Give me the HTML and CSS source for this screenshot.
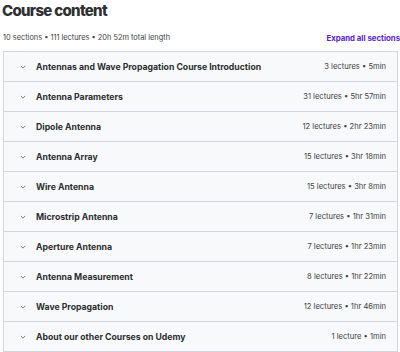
FILE: index.html
```html
<!DOCTYPE html>
<html>
<head>
<meta charset="utf-8">
<link rel="stylesheet" href="styles.css">
</head>
<body>
<div class="page">
  <h2 class="title">Course content</h2>
  <div class="meta">
    <span class="stats">10 sections • 111 lectures • 20h 52m total length</span>
    <span class="expand">Expand all sections</span>
  </div>
  <div class="list">
    <div class="row"><svg class="chev" viewBox="0 0 8 5"><path d="M1 1l3 3 3-3" /></svg><span class="name">Antennas and Wave Propagation Course Introduction</span><span class="info">3 lectures • 5min</span></div>
    <div class="row"><svg class="chev" viewBox="0 0 8 5"><path d="M1 1l3 3 3-3" /></svg><span class="name">Antenna Parameters</span><span class="info">31 lectures • 5hr 57min</span></div>
    <div class="row"><svg class="chev" viewBox="0 0 8 5"><path d="M1 1l3 3 3-3" /></svg><span class="name">Dipole Antenna</span><span class="info">12 lectures • 2hr 23min</span></div>
    <div class="row"><svg class="chev" viewBox="0 0 8 5"><path d="M1 1l3 3 3-3" /></svg><span class="name">Antenna Array</span><span class="info">15 lectures • 3hr 18min</span></div>
    <div class="row"><svg class="chev" viewBox="0 0 8 5"><path d="M1 1l3 3 3-3" /></svg><span class="name">Wire Antenna</span><span class="info">15 lectures • 3hr 8min</span></div>
    <div class="row"><svg class="chev" viewBox="0 0 8 5"><path d="M1 1l3 3 3-3" /></svg><span class="name">Microstrip Antenna</span><span class="info">7 lectures • 1hr 31min</span></div>
    <div class="row"><svg class="chev" viewBox="0 0 8 5"><path d="M1 1l3 3 3-3" /></svg><span class="name">Aperture Antenna</span><span class="info">7 lectures • 1hr 23min</span></div>
    <div class="row"><svg class="chev" viewBox="0 0 8 5"><path d="M1 1l3 3 3-3" /></svg><span class="name">Antenna Measurement</span><span class="info">8 lectures • 1hr 22min</span></div>
    <div class="row"><svg class="chev" viewBox="0 0 8 5"><path d="M1 1l3 3 3-3" /></svg><span class="name">Wave Propagation</span><span class="info">12 lectures • 1hr 46min</span></div>
    <div class="row"><svg class="chev" viewBox="0 0 8 5"><path d="M1 1l3 3 3-3" /></svg><span class="name">About our other Courses on Udemy</span><span class="info">1 lecture • 1min</span></div>
  </div>
</div>
</body>
</html>
```
FILE: styles.css
```css
* { box-sizing: border-box; }
html, body { margin: 0; padding: 0; background: #ffffff; }
body { font-family: Inter, "Liberation Sans", sans-serif; color: #2d2f31; }
.page { width: 400px; height: 352px; overflow: hidden; padding: 0 0 0 3px; }
.title { margin: 0 0 0 -1px; padding: 1px 0 0 0; font-size: 15px; font-weight: 800; line-height: 20px; letter-spacing: -0.7px; }
.meta { display: flex; justify-content: space-between; align-items: center; height: 30px; padding-top: 3px; font-size: 7.4px; }
.stats { color: #3e4143; }
.expand { color: #5624d0; font-weight: 700; font-size: 7.8px; }
.list { width: 395px; border: 1px solid #d1d7dc; border-bottom: none; }
.row { display: flex; align-items: center; height: 30px; background: #f7f9fa; border-bottom: 1px solid #d1d7dc; padding: 0 11px 0 16px; font-size: 8.7px; }
.chev { width: 6px; height: 4px; fill: none; stroke: #6a6f73; stroke-width: 1.2; margin-right: 10px; }
.name { flex: 1; font-weight: 700; color: #2d2f31; }
.info { color: #3e4143; font-size: 7.6px; }
```
